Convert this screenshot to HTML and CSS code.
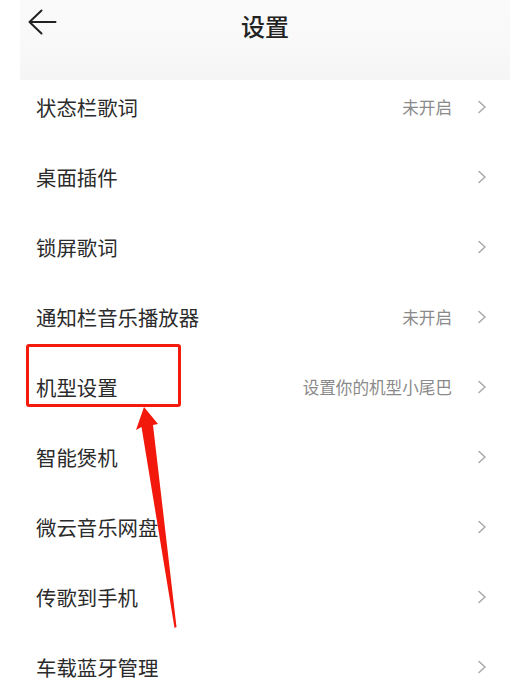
FILE: index.html
```html
<!DOCTYPE html>
<html lang="zh-CN">
<head>
<meta charset="utf-8">
<title>设置</title>
<link rel="stylesheet" href="styles.css">
</head>
<body>
<div class="page">
  <header class="header">
    <svg class="back" width="29" height="27" viewBox="0 0 29 27"><path d="M27.5 13H1.5M13.5 1.5L1.5 13L13.5 24.5" fill="none" stroke="#222" stroke-width="2" stroke-linecap="round" stroke-linejoin="round"/></svg>
    <h1 class="title">设置</h1>
  </header>
  <ul class="list">
    <li class="row"><span class="label">状态栏歌词</span><span class="right"><span class="value">未开启</span><svg class="chev" width="10" height="14" viewBox="0 0 10 14"><path d="M2 1.5L8 7L2 12.5" fill="none" stroke="#a8a8a8" stroke-width="1.5" stroke-linecap="round" stroke-linejoin="round"/></svg></span></li>
    <li class="row"><span class="label">桌面插件</span><span class="right"><svg class="chev" width="10" height="14" viewBox="0 0 10 14"><path d="M2 1.5L8 7L2 12.5" fill="none" stroke="#a8a8a8" stroke-width="1.5" stroke-linecap="round" stroke-linejoin="round"/></svg></span></li>
    <li class="row"><span class="label">锁屏歌词</span><span class="right"><svg class="chev" width="10" height="14" viewBox="0 0 10 14"><path d="M2 1.5L8 7L2 12.5" fill="none" stroke="#a8a8a8" stroke-width="1.5" stroke-linecap="round" stroke-linejoin="round"/></svg></span></li>
    <li class="row"><span class="label">通知栏音乐播放器</span><span class="right"><span class="value">未开启</span><svg class="chev" width="10" height="14" viewBox="0 0 10 14"><path d="M2 1.5L8 7L2 12.5" fill="none" stroke="#a8a8a8" stroke-width="1.5" stroke-linecap="round" stroke-linejoin="round"/></svg></span></li>
    <li class="row"><span class="label">机型设置</span><span class="right"><span class="value">设置你的机型小尾巴</span><svg class="chev" width="10" height="14" viewBox="0 0 10 14"><path d="M2 1.5L8 7L2 12.5" fill="none" stroke="#a8a8a8" stroke-width="1.5" stroke-linecap="round" stroke-linejoin="round"/></svg></span></li>
    <li class="row"><span class="label">智能煲机</span><span class="right"><svg class="chev" width="10" height="14" viewBox="0 0 10 14"><path d="M2 1.5L8 7L2 12.5" fill="none" stroke="#a8a8a8" stroke-width="1.5" stroke-linecap="round" stroke-linejoin="round"/></svg></span></li>
    <li class="row"><span class="label">微云音乐网盘</span><span class="right"><svg class="chev" width="10" height="14" viewBox="0 0 10 14"><path d="M2 1.5L8 7L2 12.5" fill="none" stroke="#a8a8a8" stroke-width="1.5" stroke-linecap="round" stroke-linejoin="round"/></svg></span></li>
    <li class="row"><span class="label">传歌到手机</span><span class="right"><svg class="chev" width="10" height="14" viewBox="0 0 10 14"><path d="M2 1.5L8 7L2 12.5" fill="none" stroke="#a8a8a8" stroke-width="1.5" stroke-linecap="round" stroke-linejoin="round"/></svg></span></li>
    <li class="row"><span class="label">车载蓝牙管理</span><span class="right"><svg class="chev" width="10" height="14" viewBox="0 0 10 14"><path d="M2 1.5L8 7L2 12.5" fill="none" stroke="#a8a8a8" stroke-width="1.5" stroke-linecap="round" stroke-linejoin="round"/></svg></span></li>
  </ul>
  <div class="highlight"></div>
  <svg class="arrow" width="516" height="695" viewBox="0 0 516 695"><polygon points="144,407 136,430 141.5,427 174.5,628 176.5,627 153,425 158,424" fill="#f2190c"/></svg>
</div>
</body>
</html>
```

FILE: styles.css
```css
html, body {
  margin: 0;
  padding: 0;
  background: #ffffff;
}
body {
  font-family: "Noto Sans CJK SC", "Noto Sans", sans-serif;
  color: #2a2a2a;
}
.page {
  position: relative;
  width: 516px;
  height: 695px;
  overflow: hidden;
}
.header {
  position: relative;
  margin: 0 6px 0 20px;
  height: 80px;
  background: linear-gradient(#fafafa 0%, #f9f9f9 50%, #f5f5f5 100%);
  display: flex;
  align-items: flex-start;
  justify-content: center;
}
.back {
  position: absolute;
  left: 7.5px;
  top: 9px;
}
.title {
  margin: 0;
  padding-top: 9px;
  font-size: 24px;
  line-height: 34px;
  font-weight: 500;
  color: #222;
  letter-spacing: 0;
}
.list {
  list-style: none;
  margin: 0;
  padding: 0;
}
.row {
  height: 70px;
  box-sizing: border-box;
  padding: 13px 29px 0 36px;
  display: flex;
  justify-content: space-between;
  align-items: flex-start;
}
.label {
  font-size: 20.4px;
  line-height: 28px;
  color: #2b2b2b;
}
.right {
  display: flex;
  align-items: center;
  height: 28px;
  gap: 25px;
}
.value {
  font-size: 16.6px;
  line-height: 28px;
  color: #8a8a8a;
}
.chev {
  display: block;
}
.highlight {
  position: absolute;
  left: 26px;
  top: 344px;
  width: 149px;
  height: 57px;
  border: 3.5px solid #f41a0c;
  border-radius: 3px;
}
.arrow {
  position: absolute;
  left: 0;
  top: 0;
}
```
